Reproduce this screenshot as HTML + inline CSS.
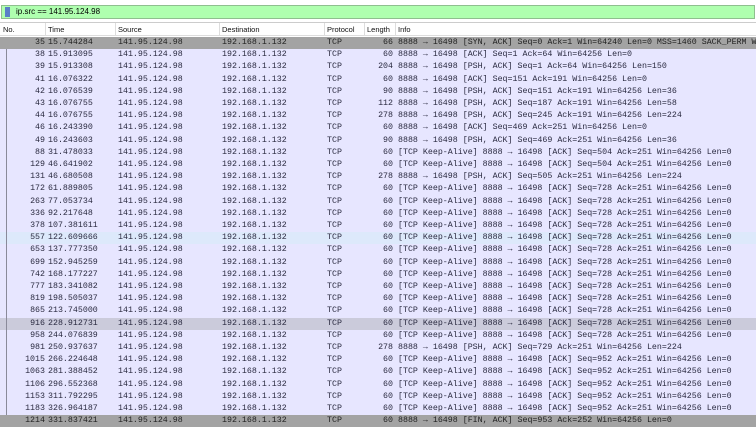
<!DOCTYPE html>
<html><head><meta charset="utf-8"><style>
body{margin:0;width:756px;height:428px;overflow:hidden;background:#fff;position:relative;font-family:"Liberation Mono",monospace}
.fb{position:absolute;left:1px;top:5px;width:754px;height:14px;background:#afffaf;border:1px solid #8fbf8f;box-sizing:border-box}
.fb .ic{position:absolute;left:3px;top:1px;width:5px;height:10px;background:#5a7fc8}
.fb .t{position:absolute;left:14px;top:1px;font:8px "Liberation Sans",sans-serif;color:#000}
.hd{position:absolute;left:0;top:22px;width:756px;height:14px;background:#fff;border-top:1px solid #ccc;border-bottom:1px solid #ddd;box-sizing:border-box;font:7.5px "Liberation Sans",sans-serif;color:#111}
.hd span{position:absolute;top:2px}
.hd i{position:absolute;top:0;height:13px;width:1px;background:#ddd}
.r{position:absolute;left:0;width:756px;height:12.2px;background:#e7e6ff;font-size:8.3px;color:#2a2a40;line-height:12.2px;white-space:nowrap}
.r span{position:absolute;top:0}
.n{right:711px;text-align:right}
.tm{left:48px}.s{left:118px}.d{left:222px}.p{left:327px}
.l{right:363px;text-align:right}.i{left:398px}
.g{background:#a3a3a3;color:#222}.b{background:#dde9fb}.m{background:#cbcbdb}
.vl{position:absolute;left:6px;top:49px;width:1px;height:366px;background:#8a8a9a}
</style></head><body>
<div class="fb"><div class="ic"></div><div class="t">ip.src == 141.95.124.98</div></div>
<div class="hd"><span style="left:3px">No.</span><i style="left:45px"></i><span style="left:48px">Time</span><i style="left:115px"></i><span style="left:118px">Source</span><i style="left:219px"></i><span style="left:222px">Destination</span><i style="left:324px"></i><span style="left:327px">Protocol</span><i style="left:364px"></i><span style="left:367px">Length</span><i style="left:395px"></i><span style="left:398px">Info</span></div>

<div class="r g" style="top:37px"><span class="n">35</span><span class="tm">15.744284</span><span class="s">141.95.124.98</span><span class="d">192.168.1.132</span><span class="p">TCP</span><span class="l">66</span><span class="i">8888 → 16498 [SYN, ACK] Seq=0 Ack=1 Win=64240 Len=0 MSS=1460 SACK_PERM WS</span></div>
<div class="r" style="top:49.2px"><span class="n">38</span><span class="tm">15.913095</span><span class="s">141.95.124.98</span><span class="d">192.168.1.132</span><span class="p">TCP</span><span class="l">60</span><span class="i">8888 → 16498 [ACK] Seq=1 Ack=64 Win=64256 Len=0</span></div>
<div class="r" style="top:61.4px"><span class="n">39</span><span class="tm">15.913308</span><span class="s">141.95.124.98</span><span class="d">192.168.1.132</span><span class="p">TCP</span><span class="l">204</span><span class="i">8888 → 16498 [PSH, ACK] Seq=1 Ack=64 Win=64256 Len=150</span></div>
<div class="r" style="top:73.6px"><span class="n">41</span><span class="tm">16.076322</span><span class="s">141.95.124.98</span><span class="d">192.168.1.132</span><span class="p">TCP</span><span class="l">60</span><span class="i">8888 → 16498 [ACK] Seq=151 Ack=191 Win=64256 Len=0</span></div>
<div class="r" style="top:85.8px"><span class="n">42</span><span class="tm">16.076539</span><span class="s">141.95.124.98</span><span class="d">192.168.1.132</span><span class="p">TCP</span><span class="l">90</span><span class="i">8888 → 16498 [PSH, ACK] Seq=151 Ack=191 Win=64256 Len=36</span></div>
<div class="r" style="top:98px"><span class="n">43</span><span class="tm">16.076755</span><span class="s">141.95.124.98</span><span class="d">192.168.1.132</span><span class="p">TCP</span><span class="l">112</span><span class="i">8888 → 16498 [PSH, ACK] Seq=187 Ack=191 Win=64256 Len=58</span></div>
<div class="r" style="top:110.2px"><span class="n">44</span><span class="tm">16.076755</span><span class="s">141.95.124.98</span><span class="d">192.168.1.132</span><span class="p">TCP</span><span class="l">278</span><span class="i">8888 → 16498 [PSH, ACK] Seq=245 Ack=191 Win=64256 Len=224</span></div>
<div class="r" style="top:122.4px"><span class="n">46</span><span class="tm">16.243390</span><span class="s">141.95.124.98</span><span class="d">192.168.1.132</span><span class="p">TCP</span><span class="l">60</span><span class="i">8888 → 16498 [ACK] Seq=469 Ack=251 Win=64256 Len=0</span></div>
<div class="r" style="top:134.6px"><span class="n">49</span><span class="tm">16.243603</span><span class="s">141.95.124.98</span><span class="d">192.168.1.132</span><span class="p">TCP</span><span class="l">90</span><span class="i">8888 → 16498 [PSH, ACK] Seq=469 Ack=251 Win=64256 Len=36</span></div>
<div class="r" style="top:146.8px"><span class="n">88</span><span class="tm">31.478033</span><span class="s">141.95.124.98</span><span class="d">192.168.1.132</span><span class="p">TCP</span><span class="l">60</span><span class="i">[TCP Keep-Alive] 8888 → 16498 [ACK] Seq=504 Ack=251 Win=64256 Len=0</span></div>
<div class="r" style="top:159px"><span class="n">129</span><span class="tm">46.641902</span><span class="s">141.95.124.98</span><span class="d">192.168.1.132</span><span class="p">TCP</span><span class="l">60</span><span class="i">[TCP Keep-Alive] 8888 → 16498 [ACK] Seq=504 Ack=251 Win=64256 Len=0</span></div>
<div class="r" style="top:171.2px"><span class="n">131</span><span class="tm">46.680508</span><span class="s">141.95.124.98</span><span class="d">192.168.1.132</span><span class="p">TCP</span><span class="l">278</span><span class="i">8888 → 16498 [PSH, ACK] Seq=505 Ack=251 Win=64256 Len=224</span></div>
<div class="r" style="top:183.4px"><span class="n">172</span><span class="tm">61.889805</span><span class="s">141.95.124.98</span><span class="d">192.168.1.132</span><span class="p">TCP</span><span class="l">60</span><span class="i">[TCP Keep-Alive] 8888 → 16498 [ACK] Seq=728 Ack=251 Win=64256 Len=0</span></div>
<div class="r" style="top:195.6px"><span class="n">263</span><span class="tm">77.053734</span><span class="s">141.95.124.98</span><span class="d">192.168.1.132</span><span class="p">TCP</span><span class="l">60</span><span class="i">[TCP Keep-Alive] 8888 → 16498 [ACK] Seq=728 Ack=251 Win=64256 Len=0</span></div>
<div class="r" style="top:207.8px"><span class="n">336</span><span class="tm">92.217648</span><span class="s">141.95.124.98</span><span class="d">192.168.1.132</span><span class="p">TCP</span><span class="l">60</span><span class="i">[TCP Keep-Alive] 8888 → 16498 [ACK] Seq=728 Ack=251 Win=64256 Len=0</span></div>
<div class="r" style="top:220px"><span class="n">378</span><span class="tm">107.381611</span><span class="s">141.95.124.98</span><span class="d">192.168.1.132</span><span class="p">TCP</span><span class="l">60</span><span class="i">[TCP Keep-Alive] 8888 → 16498 [ACK] Seq=728 Ack=251 Win=64256 Len=0</span></div>
<div class="r b" style="top:232.2px"><span class="n">557</span><span class="tm">122.609666</span><span class="s">141.95.124.98</span><span class="d">192.168.1.132</span><span class="p">TCP</span><span class="l">60</span><span class="i">[TCP Keep-Alive] 8888 → 16498 [ACK] Seq=728 Ack=251 Win=64256 Len=0</span></div>
<div class="r" style="top:244.4px"><span class="n">653</span><span class="tm">137.777350</span><span class="s">141.95.124.98</span><span class="d">192.168.1.132</span><span class="p">TCP</span><span class="l">60</span><span class="i">[TCP Keep-Alive] 8888 → 16498 [ACK] Seq=728 Ack=251 Win=64256 Len=0</span></div>
<div class="r" style="top:256.6px"><span class="n">699</span><span class="tm">152.945259</span><span class="s">141.95.124.98</span><span class="d">192.168.1.132</span><span class="p">TCP</span><span class="l">60</span><span class="i">[TCP Keep-Alive] 8888 → 16498 [ACK] Seq=728 Ack=251 Win=64256 Len=0</span></div>
<div class="r" style="top:268.8px"><span class="n">742</span><span class="tm">168.177227</span><span class="s">141.95.124.98</span><span class="d">192.168.1.132</span><span class="p">TCP</span><span class="l">60</span><span class="i">[TCP Keep-Alive] 8888 → 16498 [ACK] Seq=728 Ack=251 Win=64256 Len=0</span></div>
<div class="r" style="top:281px"><span class="n">777</span><span class="tm">183.341082</span><span class="s">141.95.124.98</span><span class="d">192.168.1.132</span><span class="p">TCP</span><span class="l">60</span><span class="i">[TCP Keep-Alive] 8888 → 16498 [ACK] Seq=728 Ack=251 Win=64256 Len=0</span></div>
<div class="r" style="top:293.2px"><span class="n">819</span><span class="tm">198.505037</span><span class="s">141.95.124.98</span><span class="d">192.168.1.132</span><span class="p">TCP</span><span class="l">60</span><span class="i">[TCP Keep-Alive] 8888 → 16498 [ACK] Seq=728 Ack=251 Win=64256 Len=0</span></div>
<div class="r" style="top:305.4px"><span class="n">865</span><span class="tm">213.745000</span><span class="s">141.95.124.98</span><span class="d">192.168.1.132</span><span class="p">TCP</span><span class="l">60</span><span class="i">[TCP Keep-Alive] 8888 → 16498 [ACK] Seq=728 Ack=251 Win=64256 Len=0</span></div>
<div class="r m" style="top:317.6px"><span class="n">916</span><span class="tm">228.912731</span><span class="s">141.95.124.98</span><span class="d">192.168.1.132</span><span class="p">TCP</span><span class="l">60</span><span class="i">[TCP Keep-Alive] 8888 → 16498 [ACK] Seq=728 Ack=251 Win=64256 Len=0</span></div>
<div class="r" style="top:329.8px"><span class="n">958</span><span class="tm">244.076839</span><span class="s">141.95.124.98</span><span class="d">192.168.1.132</span><span class="p">TCP</span><span class="l">60</span><span class="i">[TCP Keep-Alive] 8888 → 16498 [ACK] Seq=728 Ack=251 Win=64256 Len=0</span></div>
<div class="r" style="top:342px"><span class="n">981</span><span class="tm">250.937637</span><span class="s">141.95.124.98</span><span class="d">192.168.1.132</span><span class="p">TCP</span><span class="l">278</span><span class="i">8888 → 16498 [PSH, ACK] Seq=729 Ack=251 Win=64256 Len=224</span></div>
<div class="r" style="top:354.2px"><span class="n">1015</span><span class="tm">266.224648</span><span class="s">141.95.124.98</span><span class="d">192.168.1.132</span><span class="p">TCP</span><span class="l">60</span><span class="i">[TCP Keep-Alive] 8888 → 16498 [ACK] Seq=952 Ack=251 Win=64256 Len=0</span></div>
<div class="r" style="top:366.4px"><span class="n">1063</span><span class="tm">281.388452</span><span class="s">141.95.124.98</span><span class="d">192.168.1.132</span><span class="p">TCP</span><span class="l">60</span><span class="i">[TCP Keep-Alive] 8888 → 16498 [ACK] Seq=952 Ack=251 Win=64256 Len=0</span></div>
<div class="r" style="top:378.6px"><span class="n">1106</span><span class="tm">296.552368</span><span class="s">141.95.124.98</span><span class="d">192.168.1.132</span><span class="p">TCP</span><span class="l">60</span><span class="i">[TCP Keep-Alive] 8888 → 16498 [ACK] Seq=952 Ack=251 Win=64256 Len=0</span></div>
<div class="r" style="top:390.8px"><span class="n">1153</span><span class="tm">311.792295</span><span class="s">141.95.124.98</span><span class="d">192.168.1.132</span><span class="p">TCP</span><span class="l">60</span><span class="i">[TCP Keep-Alive] 8888 → 16498 [ACK] Seq=952 Ack=251 Win=64256 Len=0</span></div>
<div class="r" style="top:403px"><span class="n">1183</span><span class="tm">326.964187</span><span class="s">141.95.124.98</span><span class="d">192.168.1.132</span><span class="p">TCP</span><span class="l">60</span><span class="i">[TCP Keep-Alive] 8888 → 16498 [ACK] Seq=952 Ack=251 Win=64256 Len=0</span></div>
<div class="r g" style="top:415.2px"><span class="n">1214</span><span class="tm">331.837421</span><span class="s">141.95.124.98</span><span class="d">192.168.1.132</span><span class="p">TCP</span><span class="l">60</span><span class="i">8888 → 16498 [FIN, ACK] Seq=953 Ack=252 Win=64256 Len=0</span></div>
<div class="vl"></div>
</body></html>
